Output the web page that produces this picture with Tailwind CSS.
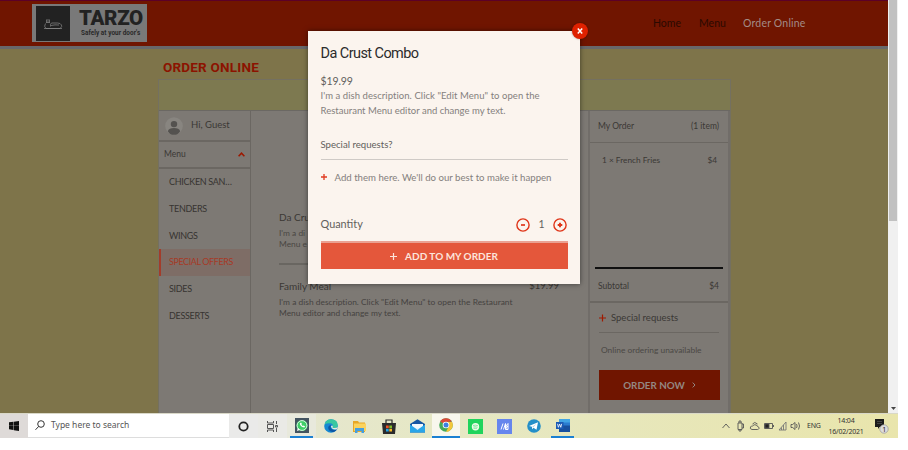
<!DOCTYPE html>
<html lang="en">
<head>
<meta charset="utf-8">
<title>Tarzo – Order Online</title>
<script src="https://cdn.jsdelivr.net/npm/@tailwindcss/browser@4"></script>
</head>
<body class="w-[908px] h-[450px] overflow-hidden bg-white font-['Lato',sans-serif] text-[#3b3835] whitespace-nowrap">
<div class="relative w-[898px]">
  <div class="flex h-[413px] overflow-hidden">
    <!-- Site page, dimmed behind the dialog -->
    <main class="w-[888px] h-[413px] bg-[#7e744a]">
      <header class="h-[46px] border-t border-[#5c0027] bg-[#701500] flex justify-between pl-8 pr-[83px]">
        <div class="mt-[3px] h-[38px] w-[115px] bg-[#797979] flex pl-1">
          <div class="mt-[2px] w-[34px] h-[35px] bg-[#222] flex items-center justify-center">
            <svg width="20" height="12" viewBox="0 0 20 12" fill="none" stroke="#8a8a8a" stroke-width=".7"><path d="M3.500 4.500V1.500M5 4.500V1M6.500 4.500V1.500M3 4.500h4M2.500 5.500Q.5 8.500 3 10.500h14q2.500-2 1.500-3.500-1-2-4-2H8.500Q7 6 7.500 8.500M8 7.500q4-1 8-.5M1 10.500h18"/></svg>
          </div>
          <div class="pl-[9px] pt-[3px]">
            <div class="font-['Roboto',sans-serif] font-black text-[20.500px] leading-[22px] tracking-[-0.300px] text-[#222]">TARZO</div>
            <div class="pl-[2px] font-['Roboto',sans-serif] font-bold text-[6.400px] leading-[8px] tracking-[0.050px] text-[#292929]">Safely at your door's</div>
          </div>
        </div>
        <nav class="flex gap-[17px] pt-[14px] text-[10.500px] leading-4 text-[#2a0900]"><span class="w-[29px]">Home</span><span class="w-[27px]">Menu</span><span class="w-[62px] tracking-[0.200px] text-[#a38c87]">Order Online</span></nav>
      </header>
      <div class="h-[3px] bg-[#68686a]"></div>
      <h1 class="mt-[8px] ml-[163px] h-[22px] font-['Roboto',sans-serif] font-bold text-[13.500px] leading-5 tracking-[0.200px] text-[#8c1300]">ORDER ONLINE</h1>
      <section class="ml-[158px] w-[573px] border border-b-0 border-[#747060]">
        <div class="h-[30px] bg-[#7d7950]"></div>
        <div class="flex h-[304px] bg-[#7d7974] border-t border-[#6b6863] text-[9px]">
          <aside class="w-[92px] border-r border-[#6b6762]">
            <div class="h-[31px] border-b-2 border-[#6b6762] flex items-center pl-[6px] gap-[8px]">
              <svg width="18" height="20" viewBox="0 0 19 20"><circle cx="9.500" cy="10" r="9.300" fill="#888580"/><circle cx="9.500" cy="8" r="3.400" fill="#54524f"/><path d="M3 15.500q1-3.500 6.500-3.500t6.500 3.500q-2 3.800-6.500 3.800T3 15.500" fill="#54524f"/></svg>
              <span class="text-[9.500px]">Hi, Guest</span>
            </div>
            <div class="h-[27px] border-b-2 border-[#6b6762] flex items-center justify-between pl-[5px] pr-[5px]">
              <span class="text-[8.500px]">Menu</span>
              <svg width="7" height="5" viewBox="0 0 7 5" fill="none" stroke="#9d1900" stroke-width="1.500"><path d="M.6 4.300 3.500 1.200 6.400 4.300"/></svg>
            </div>
            <div class="leading-[26.800px] text-[9px] tracking-[-0.300px] text-[#373431]">
              <div class="pl-[10px]">CHICKEN SAN…</div>
              <div class="pl-[10px]">TENDERS</div>
              <div class="pl-[10px]">WINGS</div>
              <div class="pl-2 border-l-2 border-[#a33c2a] bg-[#7e6d66] tracking-[-0.420px] text-[#a63a27]">SPECIAL OFFERS</div>
              <div class="pl-[10px]">SIDES</div>
              <div class="pl-[10px]">DESSERTS</div>
            </div>
          </aside>
          <div class="w-[337px] pl-7 pt-[98px]">
            <div class="text-[10px] leading-4">Da Cru</div>
            <p class="mt-[3px] text-[8.400px] leading-[11px] text-[#4a4743]">I'm a di<br>Menu e</p>
            <div class="mt-[13px] w-[281px] h-[2px] bg-[#696661]"></div>
            <div class="mt-[13px] w-[280px] flex justify-between text-[10px] leading-4"><span>Family Meal</span><span class="text-[9.500px]">$19.99</span></div>
            <p class="mt-[3px] text-[8.400px] leading-[11px] tracking-[0.020px] text-[#454240]">I'm a dish description. Click "Edit Menu" to open the Restaurant<br>Menu editor and change my text.</p>
          </div>
          <aside class="w-[142px] border-l-2 border-r-2 border-[#716d69]">
            <div class="h-[32px] border-b border-[#6b6762] flex items-center justify-between pl-[8px] pr-[9px] text-[8.500px]"><span>My Order</span><span>(1 item)</span></div>
            <div class="h-[126px] mx-[5px] pl-[7px] pr-[6px] pt-[11px] border-b-2 border-[#101010] flex justify-between text-[8.300px] leading-3"><span>1 × French Fries</span><span>$4</span></div>
            <div class="h-[34px] border-b-2 border-[#6b6762] flex items-center justify-between pl-[8px] pr-[9px] pt-[3px] text-[8.500px]"><span>Subtotal</span><span>$4</span></div>
            <div class="mx-[9px] h-[30px] border-b border-[#6b6762] flex items-center gap-[5px] pt-px text-[9.500px]">
              <svg width="7" height="8" viewBox="0 0 7 8" stroke="#a01a00" stroke-width="1.200"><path d="M3.500 .5v7M0 4h7"/></svg><span>Special requests</span>
            </div>
            <div class="pl-[11px] pt-[11px] text-[8.400px] leading-3 text-[#4b4844]">Online ordering unavailable</div>
            <div class="mt-[14px] ml-[9px] w-[121px] h-[30px] bg-[#701500] flex items-center justify-center gap-[7px] text-[9.800px] font-bold text-[#948782]"><span>ORDER NOW</span><svg width="4" height="6" viewBox="0 0 4 6" fill="none" stroke="#948782"><path d="M.7.6 3 3 .7 5.400"/></svg></div>
          </aside>
        </div>
      </section>
    </main>
    <!-- Scrollbar -->
    <div class="w-[10px] bg-[#f0f0f0] flex flex-col justify-between items-center">
      <div class="w-[8px] h-[221px] bg-[#c1c1c1]"></div>
      <svg class="mb-[3px]" width="5" height="3" viewBox="0 0 5 3"><path d="M0 0h5L2.500 3z" fill="#444"/></svg>
    </div>
  </div>

  <!-- Taskbar -->
  <footer class="flex h-[25px] bg-linear-to-r from-[#e4e3e2] via-[#e6e8c4] to-[#e9e5ac] text-[#333] border-t border-[#d9d8c8]">
    <div class="w-[28px] flex items-center justify-center bg-[#dedad8]"><svg width="10" height="10" viewBox="0 0 11 11"><path d="M0 1.500 4.800.9v4.200H0zM5.300.8 11 0v5.100H5.300zM0 5.600h4.800v4.200L0 9.200zM5.300 5.600H11V11l-5.700-.8z" fill="#111"/></svg></div>
    <div class="w-[201px] bg-white border-b border-[#ddd] flex items-center pl-[7px] gap-[6px] text-[8.500px] font-['Noto_Sans',sans-serif]">
      <svg width="10" height="11" viewBox="0 0 10 11" fill="none" stroke="#333"><circle cx="6" cy="4" r="3.300"/><path d="M3.700 6.400.5 9.800"/></svg><span class="text-[#555]">Type here to search</span>
    </div>
    <div class="w-[29px] flex items-center justify-center bg-[#eaeae9]"><svg width="11" height="11" viewBox="0 0 11 11"><circle cx="5.500" cy="5.500" r="4.200" fill="none" stroke="#222" stroke-width="1.800"/></svg></div>
    <div class="w-[29px] flex items-center justify-center bg-[#eaeae6]"><svg width="11" height="11" viewBox="0 0 11 11" fill="none" stroke="#555"><path d="M.5 0v2h6V0M.5 3.500h6v4h-6zM.5 11V9h6v2M9.500 0v3M9.500 7v4M8.500 4.500h2v1.500h-2z"/></svg></div>
    <div class="w-[29px] flex items-center justify-center bg-[#e8e9dc]"><div class="w-[23px] h-full border-b-2 border-[#1b80d2] flex justify-center pt-[4px]"><svg width="14" height="15" viewBox="0 0 14 15"><path d="M0 0h14v15H0z" fill="#435460"/><circle cx="7" cy="7.500" r="5.500" fill="#3fcf68"/><path d="m2 13 .8-3 2 2z" fill="#fff"/><circle cx="7" cy="7.500" r="4.900" fill="none" stroke="#fff" stroke-width=".8"/><path d="M4.800 5.200q0 3.500 4.500 4.400l.8-1.100-1.500-1-.8.600-1.400-1.400.5-.7-.8-1.400z" fill="#fff"/></svg></div></div>
    <div class="w-[29px] flex items-center justify-center"><svg width="14" height="14" viewBox="0 0 14 14"><circle cx="7" cy="7" r="6.800" fill="#1688d2"/><path d="M.5 5.500Q2 .2 7 .2q6.500 0 6.800 6-.4 3-4.300 2.800-1.500-.2-.7-1.500Q9.500 4.500 6 4.200 2.500 4 .5 5.500" fill="#38c7a0"/><path d="M6 6.300q-2.500 1-1.500 4 1.500 3.600 5.800 2.500 2-1 2.500-2.200-2 .8-3.800.200Q6.200 9.700 6.700 7.200 7.500 5.500 6 6.300" fill="#0c57a4"/><path d="M6.900 7.200Q8.500 5.500 8.800 7.500 8 9 9.500 9q3 .3 4.200-1.200l-.8 2.400q-4.700 1.200-6-3" fill="#e5ecdc"/></svg></div>
    <div class="w-[29px] flex items-center justify-center"><svg width="13" height="13" viewBox="0 0 13 13"><path d="M0 1h5l1 1.500h6V12H0z" fill="#e8a827"/><path d="M1 3.500h12V11H1z" fill="#fbd35d"/><path d="M2 13V8h9v5H8.500v-2h-4v2z" fill="#459fe0"/></svg></div>
    <div class="w-[29px] flex items-center justify-center"><svg width="14" height="15" viewBox="0 0 14 15"><path d="M0 4h14l-1 11H1z" fill="#2b2b2b"/><path d="M4 5V1h6v4" fill="none" stroke="#2b2b2b" stroke-width="1.200"/><path d="M4 6.500h2.700v2.700H4z" fill="#f15324"/><path d="M7.300 6.500H10v2.700H7.300z" fill="#80bb2b"/><path d="M4 9.800h2.700v2.700H4z" fill="#21a5e8"/><path d="M7.300 9.800H10v2.700H7.300z" fill="#fbba25"/></svg></div>
    <div class="w-[29px] flex items-center justify-center"><svg width="15" height="14" viewBox="0 0 15 14"><path d="M0 5 7.500.3 15 5v8.500H0z" fill="#1556a3"/><path d="M2 5h11v5H2z" fill="#f1f7fb"/><path d="m0 5.500 5 3.500h5l5-3.500v8H0z" fill="#29a5e8"/><path d="M5 9h5l-2.500 2z" fill="#dff1fb"/></svg></div>
    <div class="w-[28px] flex items-center justify-center bg-[#f8f7ed] border-b-2 border-[#1b80d2]"><svg width="14" height="14" viewBox="0 0 14 14"><circle cx="7" cy="7" r="6.800" fill="#47a858"/><path d="M7 7 1.100 3.600A6.800 6.800 0 0 1 12.900 3.600L7 4z" fill="#dd4939"/><path d="M7 4h6.100A6.800 6.800 0 0 1 7 13.800L10 8z" fill="#f4c63a"/><circle cx="7" cy="7" r="3.300" fill="#fff"/><circle cx="7" cy="7" r="2.500" fill="#3e7fe0"/></svg></div>
    <div class="w-[30px] flex items-center justify-center"><svg width="15" height="15" viewBox="0 0 15 15"><path d="M0 0h15v15H0z" fill="#20d45c"/><circle cx="7.500" cy="7.700" r="3.700" fill="#effbe9"/><path d="M5 6.500q2.500-.9 5 .3M5.300 8q2-.6 4.200.3M5.600 9.400q1.700-.4 3.200.2" fill="none" stroke="#20d45c" stroke-width=".5"/></svg></div>
    <div class="w-[29px] flex items-center justify-center"><svg width="15" height="15" viewBox="0 0 15 15"><path d="M0 0h15v15H0z" fill="#6686ed"/><path d="m4 10.500 2-6M6.500 10.500l2-6v6M8.500 7.500l2.500-3v6H8.700l1-3H11" fill="none" stroke="#fff" stroke-width="1"/></svg></div>
    <div class="w-[29px] flex items-center justify-center"><svg width="14" height="14" viewBox="0 0 14 14"><circle cx="7" cy="7" r="6.800" fill="#248fc8"/><path d="m2 7 9-3.700-1.500 7.500-3-2-1.300 1.400-.3-2.400z" fill="#fff"/><path d="m5 8 4.500-3.200L6.400 8.200" fill="#a9cee0"/></svg></div>
    <div class="w-[29px] flex items-center justify-center"><div class="w-[23px] h-full border-b-2 border-[#1b80d2] flex justify-center pt-[5px]"><svg width="14" height="13" viewBox="0 0 14 13"><path d="M3 0h11v4H3z" fill="#41a4e5"/><path d="M3 3.500h11v3.500H3z" fill="#2b7cd0"/><path d="M3 6.500h11V13H3z" fill="#17509f"/><path d="M0 3h7.500v7H0z" fill="#1b5ab4"/><path d="m1.500 4.800.9 3.500 1.200-3.300 1.200 3.300.9-3.500" fill="none" stroke="#fff" stroke-width=".8"/></svg></div></div>
    <div class="ml-auto flex items-center pr-[9px] font-['Noto_Sans',sans-serif] text-[#333]">
      <svg width="80" height="12" viewBox="0 0 80 12" fill="none" stroke="#555" stroke-width=".9"><path d="m.5 8 3.500-4 3.500 4"/><path d="M16 3h4v6.500h-4zM17 3V1h2v2M17 9.500v1.500h2V9.500M20 4h1.500v4H20"/><path d="M30 9.500q-2.500-.5-1.500-2.500 1-1.500 2-1 1.500-2 3.500-1 1.500.3 1.500 1.500 2 .5 1.500 2-.5 1-1.500 1zM30.500 4q2-3 5 0"/><path d="M42.500 3.500h8v5h-8zM51.500 5v2"/><path d="M43 4h4v4h-4z" fill="#222"/><path d="m57 10 7-8v8zM59.500 10V7.500M61.500 10V5" stroke="#777"/><path d="M69 4.500h1.700L73 2.500v7l-2.300-2H69zM74.500 4q1.200 2 0 4M76.500 2.500q2 3.500 0 7"/></svg>
      <span class="ml-[5px] w-[14px] text-[7px] tracking-[-0.200px]">ENG</span>
      <div class="ml-[7px] w-[36px] text-center text-[7px] leading-[11px] tracking-[-0.200px]">14:04<br>16/02/2021</div>
      <svg class="ml-[11px]" width="14" height="16" viewBox="0 0 14 16"><path d="M0 1h9v8H4.500L3 11V9H0z" fill="#1b1b1b"/><path d="M2 3.500h5M2 5.500h5" stroke="#555" stroke-width=".7"/><circle cx="9" cy="11" r="4.200" fill="#ddd" stroke="#999" stroke-width=".7"/><text x="7.300" y="13.500" font-size="7" font-family="Noto Sans" fill="#222">1</text></svg>
    </div>
  </footer>

  <!-- Dish dialog -->
  <section class="absolute left-[308px] top-[31px] w-[272px] h-[253px] bg-[#fbf4ee] px-[12.500px] pt-[14px] shadow-[0_0_5px_rgba(0,0,0,0.5)] text-[#625f5c]">
    <button class="absolute -right-[8px] -top-[8px] w-4 h-4 rounded-full bg-[#df2100] shadow-[0_0_2px_rgba(0,0,0,0.4)] flex items-center justify-center" aria-label="Close"><svg width="6" height="6" viewBox="0 0 6 6" stroke="#fff" stroke-width="1.500"><path d="m.8.5 4.400 5M5.200.5.8 5.500"/></svg></button>
    <h2 class="font-['Roboto',sans-serif] text-[14.500px] leading-[18px] tracking-[-0.570px] text-[#2b2b2b]">Da Crust Combo</h2>
    <div class="mt-[11px] text-[10.500px] leading-[15px] tracking-[-0.100px]">$19.99</div>
    <p class="text-[9.500px] leading-[14.500px] tracking-[0.060px] text-[#84807d]">I'm a dish description. Click "Edit Menu" to open the<br><span class="tracking-[0.010px]">Restaurant Menu editor and change my text.</span></p>
    <div class="mt-[19px] h-[23px] border-b border-[#cfcac6] text-[9.600px] leading-4">Special requests?</div>
    <div class="mt-[9px] flex items-center gap-[8px] text-[9.650px] leading-4 text-[#84807d]"><svg width="6" height="6" viewBox="0 0 6 6" stroke="#e03a20" stroke-width="1.300"><path d="M3 0v6M0 3h6"/></svg><span>Add them here. We'll do our best to make it happen</span></div>
    <div class="mt-[32px] h-[15px] flex items-center pr-[0.500px] text-[10.900px]">
      <span class="mr-auto">Quantity</span>
      <svg width="14" height="14" viewBox="0 0 14 14" fill="none" stroke="#df3519" stroke-width="1.400"><circle cx="7" cy="7" r="6.100"/><path d="M5 7h4" stroke-width="1.700"/></svg>
      <span class="w-[23px] text-center text-[10.500px]">1</span>
      <svg width="14" height="14" viewBox="0 0 14 14" fill="none" stroke="#df3519" stroke-width="1.400"><circle cx="7" cy="7" r="6.100"/><path d="M4.700 7h4.600M7 4.700v4.600" stroke-width="1.900"/></svg>
    </div>
    <button class="mt-[9px] w-full h-[28px] bg-[#e4573b] border-t-2 border-[#eaa192] flex items-center justify-center gap-2 text-[10px] font-bold text-[#fce4db]"><svg width="7" height="7" viewBox="0 0 7 7" stroke="#fce4db" stroke-width="1.200"><path d="M3.500 0v7M0 3.500h7"/></svg><span>ADD TO MY ORDER</span></button>
  </section>
</div>
</body>
</html>
